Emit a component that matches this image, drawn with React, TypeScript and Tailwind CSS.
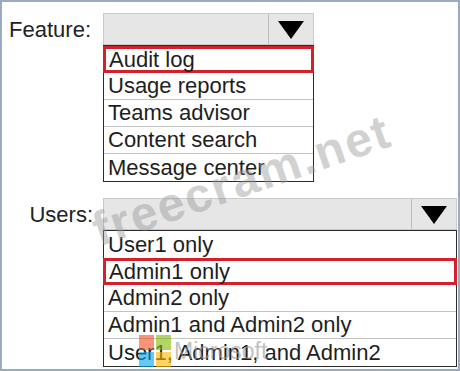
import React from "react";

const font = { fontFamily: '"Liberation Sans", Arial, sans-serif' };

function Arrow() {
  return (
    <svg width="26" height="18" viewBox="0 0 26 18">
      <polygon points="0,0 26,0 13,18" fill="#000" />
    </svg>
  );
}

function Row({ text, selected, last }: { text: string; selected?: boolean; last?: boolean }) {
  if (selected) {
    return (
      <div className="h-[27px] -mx-px border-[3px] border-[#d3202b] flex items-center pl-[3px] text-[22px] leading-none text-[#1e1e1e] bg-white">
        {text}
      </div>
    );
  }
  return (
    <div
      className={
        "h-[27px] flex items-center pl-[4px] text-[22px] leading-none text-[#1e1e1e] " +
        (last ? "" : "border-b border-[#c4c4c4]")
      }
    >
      {text}
    </div>
  );
}

function Dropdown({ width, options, selected }: { width: number; options: string[]; selected: number }) {
  return (
    <div className="flex flex-col" style={{ width }}>
      <div className="h-[32px] flex bg-[#e6e6e6] border border-[#cacaca]">
        <div className="flex-1" />
        <div className="w-[45px] border-l border-[#bdbdbd] flex items-center justify-center pt-[2px]">
          <Arrow />
        </div>
      </div>
      <div className="border border-[#2a2a2a] bg-white">
        {options.map((o, i) => (
          <Row key={o} text={o} selected={i === selected} last={i === options.length - 1 || i + 1 === selected} />
        ))}
      </div>
    </div>
  );
}

export default function App() {
  return (
    <div
      className="relative w-[460px] h-[371px] bg-white border-2 border-[#9aabbf] overflow-hidden"
      style={font}
    >
      <div className="flex flex-col pt-[11px] gap-[16px]">
        <div className="flex">
          <div className="w-[101px] pr-[12px] text-right text-[22px] leading-none text-[#222] pt-[6px]">Feature:</div>
          <Dropdown
            width={211}
            selected={0}
            options={["Audit log", "Usage reports", "Teams advisor", "Content search", "Message center"]}
          />
        </div>
        <div className="flex">
          <div className="w-[101px] pr-[10px] text-right text-[22px] leading-none text-[#222] pt-[6px]">Users:</div>
          <Dropdown
            width={354}
            selected={1}
            options={["User1 only", "Admin1 only", "Admin2 only", "Admin1 and Admin2 only", "User1, Admin1, and Admin2"]}
          />
        </div>
      </div>

      {/* watermark */}
      <div
        className="absolute left-[100px] top-[204px] text-[48px] font-bold leading-none text-[#9a9a9a] opacity-45 whitespace-nowrap origin-bottom-left rotate-[-19deg] tracking-[2px] pointer-events-none"
        style={{ fontFamily: '"Liberation Sans", Arial, sans-serif' }}
      >
        freecram.net
      </div>

      {/* microsoft logo overlay */}
      <div className="absolute left-[137px] top-[333px] grid grid-cols-2 gap-[2px] opacity-60 pointer-events-none">
        <div className="w-[15px] h-[15px] bg-[#f25022]" />
        <div className="w-[15px] h-[15px] bg-[#7fba00]" />
        <div className="w-[15px] h-[15px] bg-[#00a4ef]" />
        <div className="w-[15px] h-[15px] bg-[#ffb900]" />
      </div>
      <div className="absolute left-[172px] top-[338px] text-[23px] leading-none text-[#9a9a9a] opacity-60 pointer-events-none">
        Microsoft
      </div>
    </div>
  );
}
